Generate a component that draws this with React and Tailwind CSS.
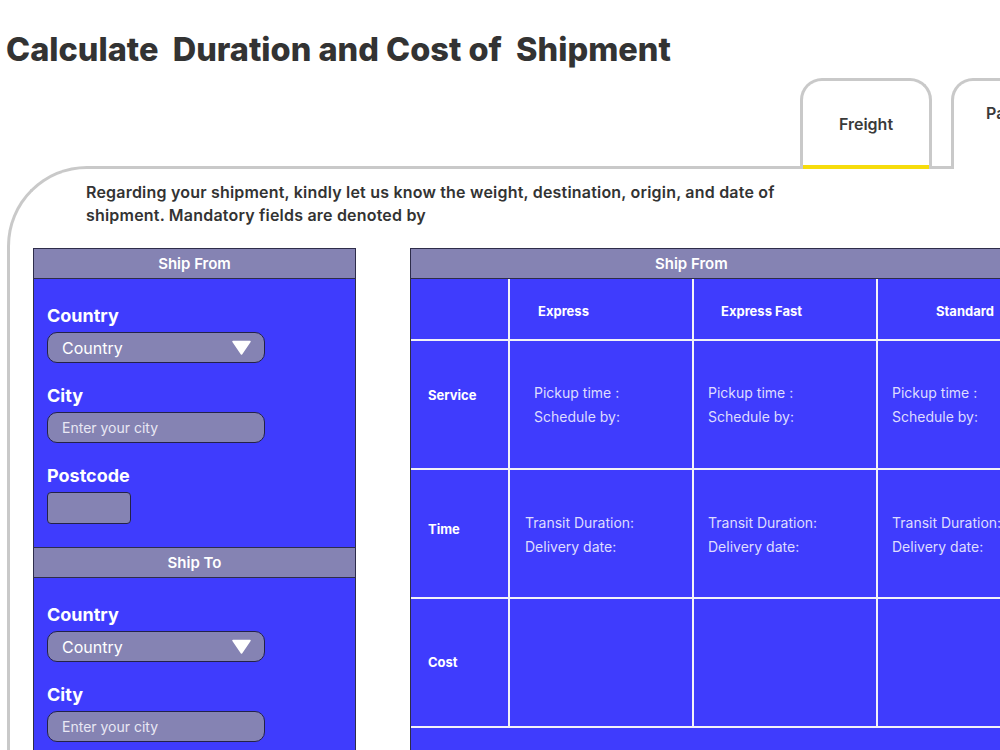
const BLUE = 'bg-[#3f3cfd]';

function Field({ label, children }) {
    return (
        <div className="flex flex-col">
            <span className="text-[18px] leading-[24px] font-bold text-white mb-[4px]">{label}</span>
            {children}
        </div>
    );
}

function CountrySelect() {
    return (
        <div className="w-[218px] h-[31px] rounded-[10px] border border-[#232248] bg-[#8583b3] flex items-center justify-between pl-[14px] pr-[13px]">
            <span className="text-[16px] text-white">Country</span>
            <svg width="19" height="15" viewBox="0 0 19 15">
                <path d="M1 1.5 L18 1.5 L9.5 14 Z" fill="#ffffff" strokeLinejoin="round" stroke="#ffffff" strokeWidth="1.5" />
            </svg>
        </div>
    );
}

function CityInput() {
    return (
        <div className="w-[218px] h-[31px] rounded-[10px] border border-[#232248] bg-[#8583b3] flex items-center pl-[14px]">
            <span className="text-[14px] text-[#e9e8f4]">Enter your city</span>
        </div>
    );
}

function SectionHeader({ title }) {
    return (
        <div className="h-[31px] bg-[#8583b3] border border-[#2e2d4a] flex items-center justify-center pt-[2px]">
            <span className="text-[15px] font-semibold text-white">{title}</span>
        </div>
    );
}

function AddressForm({ title, withPostcode }) {
    return (
        <>
            <SectionHeader title={title} />
            <div className={`${BLUE} border-x border-[#2e2d4a] pl-[13px] pt-[25px] pb-[23px] flex flex-col gap-[21px]`}>
                <Field label="Country">
                    <CountrySelect />
                </Field>
                <Field label="City">
                    <CityInput />
                </Field>
                {withPostcode && (
                    <Field label="Postcode">
                        <div className="w-[84px] h-[32px] rounded-[4px] border border-[#232248] bg-[#8583b3]"></div>
                    </Field>
                )}
            </div>
        </>
    );
}

const columns = [
    { name: 'Express', pad: 'pl-[28px]', svcPad: 'pl-[24px]', timePad: 'pl-[15px]' },
    { name: 'Express Fast', pad: 'pl-[27px]', svcPad: 'pl-[14px]', timePad: 'pl-[14px]' },
    { name: 'Standard', pad: 'pl-[58px]', svcPad: 'pl-[14px]', timePad: 'pl-[14px]' },
];

function Cell({ className = '', children }) {
    return (
        <div className={`border-r-2 border-b-2 border-[#f2f2f8] flex items-center ${className}`}>
            {children}
        </div>
    );
}

function RateTable() {
    return (
        <div className="w-[680px] shrink-0">
            <div className="h-[31px] bg-[#8583b3] border border-[#2e2d4a] flex items-center pl-[244px] pt-[2px]">
                <span className="text-[15px] font-semibold text-white">Ship From</span>
            </div>
            <div className={`${BLUE} border-l border-[#2e2d4a] grid grid-cols-[99px_184px_184px_184px] grid-rows-[62px_129px_129px_129px]`}>
                {/* header row */}
                <Cell />
                {columns.map((c) => (
                    <Cell key={c.name} className={`${c.pad} pt-[6px]`}>
                        <span className="text-[13px] font-bold text-white">{c.name}</span>
                    </Cell>
                ))}

                {/* service */}
                <Cell className="pl-[17px] pb-[18px]">
                    <span className="text-[13px] font-bold text-white">Service</span>
                </Cell>
                {columns.map((c) => (
                    <Cell key={c.name} className={c.svcPad}>
                        <div className="text-[14px] leading-[24px] text-[#dedcff]">
                            <p>Pickup time :</p>
                            <p>Schedule by:</p>
                        </div>
                    </Cell>
                ))}

                {/* time */}
                <Cell className="pl-[17px] pb-[8px]">
                    <span className="text-[13px] font-bold text-white">Time</span>
                </Cell>
                {columns.map((c) => (
                    <Cell key={c.name} className={c.timePad}>
                        <div className="text-[14px] leading-[24px] text-[#dedcff] pt-[2px]">
                            <p>Transit Duration:</p>
                            <p>Delivery date:</p>
                        </div>
                    </Cell>
                ))}

                {/* cost */}
                <Cell className="pl-[17px]">
                    <span className="text-[13px] font-bold text-white">Cost</span>
                </Cell>
                {columns.map((c) => (
                    <Cell key={c.name} />
                ))}
            </div>
            <div className={`${BLUE} border-l border-[#2e2d4a] h-[60px]`}></div>
        </div>
    );
}

export default function App() {
    return (
        <div className="w-[1000px] h-[750px] overflow-hidden bg-white text-[#333333] font-['Inter','Liberation_Sans',sans-serif]">
            {/* Title */}
            <h1 className="pl-[6px] pt-[30px] text-[32.5px] leading-[40px] font-extrabold whitespace-pre">
                {'Calculate  Duration and Cost of  Shipment'}
            </h1>

            {/* Tabs */}
            <div className="flex gap-[19px] pl-[800px] mt-[8px] -mb-[3px] relative z-10">
                <div className="w-[132px] h-[91px] shrink-0 bg-white border-[3px] border-b-0 border-[#c9c9c9] rounded-t-[22px] flex flex-col">
                    <div className="flex-1 flex items-center justify-center pt-[2px]">
                        <span className="text-[16px] font-semibold text-[#3a3a3a]">Freight</span>
                    </div>
                    <div className="h-[4px] bg-[#f6dc0c]"></div>
                </div>
                <div className="w-[132px] h-[91px] shrink-0 bg-white border-[3px] border-b-0 border-[#c9c9c9] rounded-t-[22px] pl-[32px] pt-[20px]">
                    <span className="text-[16px] font-semibold text-[#3a3a3a]">Parcel</span>
                </div>
            </div>

            {/* Panel */}
            <div className="ml-[7px] w-[1100px] h-[700px] border-l-[3px] border-t-[3px] border-[#c9c9c9] rounded-tl-[80px]">
                <p className="pl-[76px] pt-[12px] text-[16px] leading-[23px] font-semibold tracking-[0.2px] text-[#333333]">
                    Regarding your shipment, kindly let us know the weight, destination, origin, and date of
                    <br />
                    shipment. Mandatory fields are denoted by
                </p>

                <div className="flex items-start mt-[21px] pl-[23px] gap-[54px]">
                    <div className="w-[323px] shrink-0 flex flex-col">
                        <AddressForm title="Ship From" withPostcode />
                        <AddressForm title="Ship To" />
                    </div>
                    <RateTable />
                </div>
            </div>
        </div>
    );
}
